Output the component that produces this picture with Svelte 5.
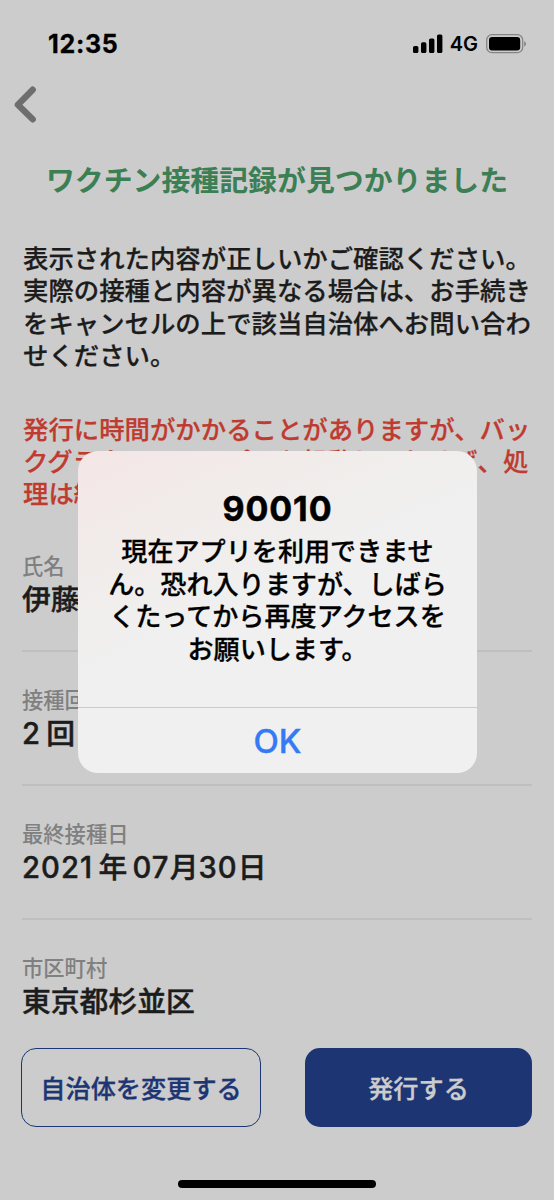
<script lang="ts">
  type Row = { label: string; value: string };

  const rows: Row[] = [
    { label: '氏名', value: '伊藤' },
    { label: '接種回数', value: '2 回' },
    { label: '最終接種日', value: '2021 年 07月30日' },
    { label: '市区町村', value: '東京都杉並区' }
  ];

  const intro = [
    '表示された内容が正しいかご確認ください。',
    '実際の接種と内容が異なる場合は、お手続き',
    'をキャンセルの上で該当自治体へお問い合わ',
    'せください。'
  ];

  const warning = [
    '発行に時間がかかることがありますが、バッ',
    'クグラウンドでアプリを起動しておけば、処',
    '理は続きます。'
  ];

  const message = [
    '現在アプリを利用できませ',
    'ん。恐れ入りますが、しばら',
    'くたってから再度アクセスを',
    'お願いします。'
  ];

  // keep digit runs separate so they can be spaced on their own
  const parts = (value: string) => value.split(/(\d+)/).filter(Boolean);
</script>

<div class="screen">
  <header class="status">
    <span class="time">12:35</span>
    <div class="indicators">
      <svg class="signal" width="30" height="20" viewBox="0 0 30 20">
        <rect x="0" y="12" width="5.4" height="7" rx="1.6" />
        <rect x="8" y="8.3" width="5.4" height="10.7" rx="1.6" />
        <rect x="16" y="4.4" width="5.4" height="14.6" rx="1.6" />
        <rect x="24" y="0.4" width="5.4" height="18.6" rx="1.6" />
      </svg>
      <span class="network">4G</span>
      <svg class="battery" width="41" height="20" viewBox="0 0 41 20">
        <rect x="0.7" y="0.7" width="36" height="18" rx="5.4" fill="none" stroke="#858585" stroke-width="1.3" />
        <rect x="3" y="3" width="31.2" height="13.4" rx="3.2" />
        <path d="M38.2 7.2c2.4 1 2.4 4.3 0 5.3z" fill="#858585" />
      </svg>
    </div>
  </header>

  <nav>
    <button class="back" aria-label="戻る">
      <svg width="24" height="38" viewBox="0 0 24 38">
        <path d="M18.7 3.7 3.9 18.7 18.7 33.3" fill="none" stroke="#6e6e6e" stroke-width="6.4" stroke-linecap="round" stroke-linejoin="round" />
      </svg>
    </button>
  </nav>

  <main>
    <h1>ワクチン接種記録が見つかりました</h1>
    <p class="text">
      {#each intro as line}<span>{line}</span>{/each}
    </p>
    <p class="text warning">
      {#each warning as line}<span>{line}</span>{/each}
    </p>

    <dl>
      {#each rows as row}
        <div class="row">
          <dt>{row.label}</dt>
          <dd>{#each parts(row.value) as part}<span class:num={/\d/.test(part)}>{part}</span>{/each}</dd>
        </div>
      {/each}
    </dl>
  </main>

  <footer>
    <button class="action outline">自治体を変更する</button>
    <button class="action filled">発行する</button>
  </footer>

  <div class="home"></div>

  <div class="dialog" role="alertdialog" aria-labelledby="dialog-title">
    <div class="dialog-body">
      <h2 id="dialog-title">90010</h2>
      <p>
        {#each message as line}<span>{line}</span>{/each}
      </p>
    </div>
    <button class="ok">OK</button>
  </div>
</div>

<style>
  :global(body) {
    margin: 0;
    background: #ccc;
  }

  .screen {
    position: relative;
    display: flex;
    flex-direction: column;
    width: 554px;
    height: 1200px;
    overflow: hidden;
    background: #ccc;
    color: #1c1c1c;
    font-family: Inter, 'Noto Sans CJK JP', sans-serif;
  }

  h1,
  h2,
  p,
  dl,
  dd {
    margin: 0;
  }

  button {
    padding: 0;
    border: 0;
    background: none;
    font: inherit;
  }

  .status {
    display: flex;
    align-items: center;
    justify-content: space-between;
    height: 88px;
    padding: 0 27px 0 48px;
    box-sizing: border-box;
    color: #000;
  }

  .time {
    font-size: 25px;
    font-weight: 700;
    letter-spacing: 0.7px;
    -webkit-text-stroke: 0.3px currentColor;
  }

  .indicators {
    display: flex;
    align-items: center;
  }

  .network {
    margin: 0 8px 0 7px;
    font-size: 20px;
    font-weight: 600;
  }

  nav {
    height: 64px;
    padding-left: 15px;
  }

  .back {
    display: block;
    height: 32px;
  }

  .back svg {
    display: block;
    margin-left: -1px;
    margin-top: -2px;
  }

  main {
    padding: 0 22px;
  }

  h1 {
    height: 56px;
    padding-top: 1px;
    box-sizing: border-box;
    color: #3c7f54;
    font-size: 28.9px;
    font-weight: 700;
    line-height: 56px;
    text-align: center;
    white-space: nowrap;
  }

  .text {
    margin-top: 35px;
    padding-left: 1px;
    font-size: 25.4px;
    font-weight: 500;
    line-height: 32.4px;
    -webkit-text-stroke: 0.25px currentColor;
  }

  .text span,
  .dialog p span {
    display: block;
    white-space: nowrap;
  }

  .warning {
    margin-top: 41px;
    color: #bf3b30;
  }

  dl {
    margin-top: 7px;
  }

  .row {
    height: 134px;
    box-sizing: border-box;
    padding-top: 33px;
    border-bottom: 2px solid #bfbfbf;
  }

  .row:last-child {
    border: 0;
  }

  dt {
    color: #808080;
    font-size: 21.3px;
    font-weight: 500;
    line-height: 30px;
  }

  dd {
    font-size: 28.8px;
    font-weight: 500;
    line-height: 37px;
    white-space: nowrap;
    word-spacing: -2.5px;
    -webkit-text-stroke: 0.45px currentColor;
  }

  .num {
    font-size: 29.2px;
    letter-spacing: 1.1px;
  }

  footer {
    position: absolute;
    top: 1048px;
    left: 21px;
    display: flex;
    justify-content: space-between;
    width: 511px;
  }

  .action {
    height: 79px;
    padding-bottom: 2px;
    box-sizing: border-box;
    border-radius: 15px;
    font-size: 25.2px;
    font-weight: 500;
    -webkit-text-stroke: 0.3px currentColor;
  }

  .outline {
    width: 240px;
    border: 1.5px solid #1e3574;
    color: #1e3574;
  }

  .filled {
    width: 227px;
    background: #1e3574;
    color: #ccc;
  }

  .home {
    position: absolute;
    bottom: 12px;
    left: 178px;
    width: 198px;
    height: 8px;
    border-radius: 4px;
    background: #000;
  }

  .dialog {
    position: absolute;
    top: 451px;
    left: 78px;
    display: flex;
    flex-direction: column;
    width: 399px;
    height: 322px;
    border-radius: 20px;
    background: linear-gradient(155deg, #f4e6e6 0%, #f1ecea 22%, #f0f0f0 45%);
    color: #000;
    text-align: center;
  }

  .dialog-body {
    flex: 1;
    padding-top: 35px;
  }

  h2 {
    font-size: 34px;
    font-weight: 700;
    line-height: 46px;
    letter-spacing: 0.9px;
    -webkit-text-stroke: 0.5px currentColor;
  }

  .dialog p {
    padding-top: 4px;
    font-size: 26.1px;
    font-weight: 500;
    line-height: 32.5px;
    -webkit-text-stroke: 0.3px currentColor;
  }

  .ok {
    height: 66px;
    box-sizing: border-box;
    border-top: 1px solid #cacaca;
    color: #3479f6;
    font-size: 33px;
    font-weight: 500;
    -webkit-text-stroke: 0.4px currentColor;
  }
</style>
